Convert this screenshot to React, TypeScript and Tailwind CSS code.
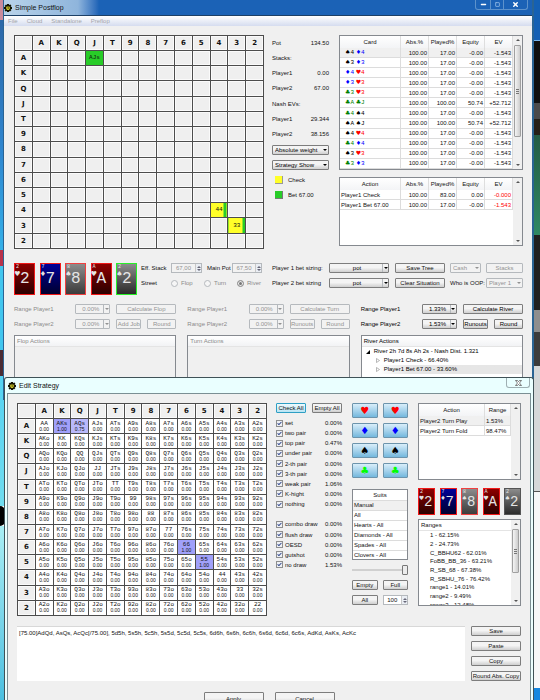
import type { ReactNode } from 'react';
import clsx from 'clsx';
import { Check, Minus, Square, X } from 'lucide-react';

const RANKS = ['A', 'K', 'Q', 'J', 'T', '9', '8', '7', '6', '5', '4', '3', '2'];

const MONO = '[font-family:"Liberation_Mono",monospace]';
const SYMBOL = '[font-family:"DejaVu_Sans",sans-serif]';

const SUITS: Record<string, { glyph: string; small: string; big: string; name: string }> = {
  h: { glyph: '♥', small: 'text-[#ff0000]', big: 'text-[#ff0000]', name: 'Hearts' },
  d: { glyph: '♦', small: 'text-[#0000ff]', big: 'text-[#0000ff]', name: 'Diamonds' },
  s: { glyph: '♠', small: 'text-black', big: 'text-black', name: 'Spades' },
  c: { glyph: '♣', small: 'text-[#008000]', big: 'text-[#00ff00]', name: 'Clubs' },
};

const COMBOS = [
  ['4s', '4d'],
  ['3s', '3d'],
  ['4d', '4h'],
  ['3d', '3h'],
  ['3c', '3h'],
  ['Ac', 'Jc', '100.00', '50.74', '+52.712'],
  ['4c', '4s'],
  ['As', 'Js', '100.00', '50.74', '+52.712'],
  ['4s', '4h'],
  ['4c', '4d'],
  ['3s', '3h'],
  ['3c', '3d'],
];

const CARDS = [
  { rank: '2', suit: 'h', face: 'from-[#8e0000] to-[#2c0000]', edge: 'border-[#f01818]' },
  { rank: '7', suit: 'd', face: 'from-[#00009a] to-[#000030]', edge: 'border-[#f01818]' },
  { rank: '8', suit: 's', face: 'from-[#8c8c8c] to-[#3c3c3c]', edge: 'border-[#f04040]' },
  { rank: 'A', suit: 'h', face: 'from-[#8e0000] to-[#2c0000]', edge: 'border-[#f01818]' },
  { rank: '2', suit: 's', face: 'from-[#8c8c8c] to-[#2c2c2c]', edge: 'border-[#28f028]' },
];

const WEIGHTS: Record<string, { value: string; color: string }> = {
  AKs: { value: '1.00', color: 'bg-[#a0a0fa]' },
  AQs: { value: '0.75', color: 'bg-[#b9b9fb]' },
  '66': { value: '1.00', color: 'bg-[#a0a0fa]' },
  '55': { value: '1.00', color: 'bg-[#a0a0fa]' },
};

const MADE_HANDS = [
  ['set', '0.00%'],
  ['two pair', '0.00%'],
  ['top pair', '0.47%'],
  ['under pair', '0.00%'],
  ['2-th pair', '0.00%'],
  ['3-th pair', '0.00%'],
  ['weak pair', '1.06%'],
  ['K-hight', '0.00%'],
  ['nothing', '0.00%'],
];

const DRAWS = [
  ['combo draw', '0.00%'],
  ['flush draw', '0.00%'],
  ['OESD', '0.00%'],
  ['gutshot', '0.00%'],
  ['no draw', '1.53%'],
];

const RANGES = [
  '1 - 62.15%',
  '2 - 24.73%',
  'C_BBHU62 - 62.01%',
  'FoBB_BB_36 - 63.21%',
  'R_SB_68 - 67.38%',
  'R_SBHU_76 - 76.42%',
  'range1 - 14.01%',
  'range2 - 9.49%',
  'range3 - 12.48%',
];

const handName = (row: number, col: number) => {
  if (row === col) return RANKS[row] + RANKS[row];
  return row < col ? `${RANKS[row]}${RANKS[col]}s` : `${RANKS[col]}${RANKS[row]}o`;
};

const Btn = ({ children, className, disabled, active }: {
  children: ReactNode;
  className?: string;
  disabled?: boolean;
  active?: boolean;
}) => (
  <button
    type="button"
    disabled={disabled}
    className={clsx(
      'flex h-[10px] items-center justify-center whitespace-nowrap rounded-[1px] border leading-none',
      disabled && 'border-[#b5b9bd] bg-[#f2f2f2] text-[#929292]',
      active && 'border-[#2e9fc4] bg-linear-to-b from-[#eefafe] to-[#b9e4f3]',
      !disabled && !active && 'border-[#7d7d7d] bg-linear-to-b from-[#f4f4f4] from-45% to-[#cfcfcf]',
      className,
    )}
  >
    {children}
  </button>
);

const Arrow = ({ up, className }: { up?: boolean; className?: string }) => (
  <svg viewBox="0 0 4 2" className={clsx('h-[2px] w-[4px] fill-current', className)}>
    <path d={up ? 'M0 2 2 0 4 2z' : 'M0 0h4L2 2z'} />
  </svg>
);

const Combo = ({ value, label, className, disabled, split, center }: {
  value: string;
  label: string;
  className?: string;
  disabled?: boolean;
  split?: boolean;
  center?: boolean;
}) => (
  <div className={clsx('relative h-[10px]', disabled ? 'text-[#929292]' : 'text-black', className)}>
    <select
      aria-label={label}
      disabled={disabled}
      className={clsx(
        'block h-full w-full appearance-none rounded-[1px] border pl-[2px] leading-[8px]',
        disabled ? 'border-[#b5b9bd] bg-[#f2f2f2]' : 'border-[#7d7d7d] bg-linear-to-b from-[#f4f4f4] from-45% to-[#cfcfcf]',
        center && 'pr-[6px] [text-align-last:center]',
      )}
    >
      <option>{value}</option>
    </select>
    <span
      className={clsx(
        'pointer-events-none absolute inset-y-[1px] right-[1px] flex w-[6px] items-center justify-center',
        split && 'border-l border-[#b5b9bd]',
      )}
    >
      <Arrow />
    </span>
  </div>
);

const Spin = ({ value, label, className, disabled }: {
  value: string;
  label: string;
  className?: string;
  disabled?: boolean;
}) => (
  <div
    className={clsx(
      'flex h-[10px] border border-[#b5b9bd]',
      disabled ? 'bg-[#f2f2f2] text-[#929292]' : 'bg-white',
      className,
    )}
  >
    <input aria-label={label} defaultValue={value} disabled={disabled} className="w-0 flex-1 text-center leading-none" />
    <span className="flex w-[6px] flex-col items-center justify-center gap-px border-l border-[#c8c8c8] bg-[#eaeef4] text-[#667]">
      <Arrow up />
      <Arrow />
    </span>
  </div>
);

const Scroll = ({ thumb, tall }: { thumb?: boolean; tall?: string }) => (
  <div className="flex w-[9px] shrink-0 flex-col items-center bg-[#f0f0f0] py-[3px] text-[#555]">
    <Arrow up />
    <div
      className={clsx(
        'mt-[4px] flex w-[7px] flex-col items-center justify-center gap-px rounded-[1px]',
        thumb && 'border border-[#a0a0a0] bg-linear-to-r from-[#f5f5f5] to-[#cdcdcd]',
        tall,
      )}
    >
      {thumb && [0, 1, 2].map((i) => <i key={i} className="h-px w-[3px] bg-[#777]" />)}
    </div>
    <Arrow className="mt-auto" />
  </div>
);

const AppIcon = () => (
  <svg viewBox="0 0 16 16" className="size-[8px]">
    <path d="M6 0h4v2l3-1 2 3-2 2h3v4h-3l2 2-3 3-2-1v2H6v-2l-3 1-2-3 2-2H0V6h3L1 4l3-3 2 1z" fill="#141400" />
    <path d="M5 5h6l1 3-2 4H6L4 8z" fill="#c9c32a" />
    <path d="M7 7h3v2H7z" fill="#3a3800" />
  </svg>
);

const RankHead = ({ children }: { children?: ReactNode }) => (
  <th
    className={clsx(
      'border border-[#4c4c4c] bg-[#efefef] p-0 text-center text-[7px] font-bold leading-[8px] shadow-[inset_0_0_0_1px_#fafafa]',
      SYMBOL,
    )}
  >
    {children}
  </th>
);

const HandMatrix = ({ className, renderCell }: {
  className?: string;
  renderCell: (hand: string) => ReactNode;
}) => (
  <table className={clsx('table-fixed border-collapse', className)}>
    <thead>
      <tr className="h-[15px]">
        <RankHead />
        {RANKS.map((rank) => <RankHead key={rank}>{rank}</RankHead>)}
      </tr>
    </thead>
    <tbody>
      {RANKS.map((rank, row) => (
        <tr key={rank} className="h-[15px]">
          <RankHead>{rank}</RankHead>
          {RANKS.map((_, col) => renderCell(handName(row, col)))}
        </tr>
      ))}
    </tbody>
  </table>
);

const BOARD_COLORS: Record<string, string> = {
  AJs: 'bg-[#28cc28]',
  '44': 'bg-linear-to-r from-[#ffff28] from-82% to-[#28cc28] to-82%',
  '33': 'bg-linear-to-r from-[#ffff28] from-82% to-[#28cc28] to-82%',
};

const boardCell = (hand: string) => (
  <td
    key={hand}
    className={clsx(
      'border border-[#4c4c4c] p-0 text-center text-[6px] leading-[8px]',
      MONO,
      BOARD_COLORS[hand] ?? 'bg-[#efefef] shadow-[inset_0_0_0_1px_#fafafa]',
    )}
  >
    {BOARD_COLORS[hand] && hand}
  </td>
);

const rangeCell = (hand: string) => (
  <td
    key={hand}
    className={clsx(
      'border border-[#4c4c4c] p-0 text-center text-[6px] leading-[6px]',
      MONO,
      WEIGHTS[hand]?.color ?? 'bg-white',
    )}
  >
    {hand}
    <span className='block [font-family:"Liberation_Sans",sans-serif] text-[5px] leading-[5px]'>
      {WEIGHTS[hand]?.value ?? '0.00'}
    </span>
  </td>
);

const Cards = ({ small }: { small?: boolean }) => (
  <div className={clsx('flex justify-between', !small && 'w-[123px]')}>
    {CARDS.map((card, i) => (
      <div
        key={i}
        className={clsx(
          'flex border bg-linear-to-b text-[#e4e4e4]',
          MONO,
          card.face,
          small && i === 4 ? 'border-[#555]' : card.edge,
          small ? 'h-[27px] w-[17px]' : 'h-[32px] w-[21px]',
        )}
      >
        <span className="flex w-[5px] shrink-0 flex-col items-center text-[5px] leading-[6px]">
          <span>{card.rank}</span>
          <span className={clsx(SYMBOL, small ? 'text-[6px]' : 'text-[7px] leading-[9px]')}>
            {SUITS[card.suit].glyph}
          </span>
        </span>
        <span className={clsx('self-center', small ? 'text-[14px]' : 'text-[16px]')}>{card.rank}</span>
      </div>
    ))}
  </div>
);

const SmallCard = ({ card }: { card: string }) => (
  <span className={clsx(MONO, SUITS[card[1]].small)}>
    <span className={SYMBOL}>{SUITS[card[1]].glyph}</span>
    {card[0]}
  </span>
);

const StatsHead = ({ first }: { first: string }) => (
  <thead>
    <tr className="h-[12px] bg-linear-to-b from-white to-[#f3f4f6]">
      {[first, 'Abs.%', 'Played%', 'Equity', 'EV'].map((name, i) => (
        <th key={name} className={clsx('border-r border-[#dedede] p-0 font-normal', i > 0 && 'w-[28px]')}>
          {name}
        </th>
      ))}
    </tr>
  </thead>
);

const STAT = 'border-r border-b border-[#dcdcdc] p-0 pr-[1px] text-right';

const CardTable = () => (
  <div className="flex h-[135px] border border-[#85898f] bg-white">
    <table className="h-full flex-1 table-fixed border-separate border-spacing-0">
      <StatsHead first="Card" />
      <tbody>
        {COMBOS.map(([a, b, played = '17.00', equity = '-0.00', ev = '-1.543'], i) => (
          <tr key={a + b} className={i === 0 ? 'bg-[#f0f0f0]' : ''}>
            <td className="border-r border-b border-[#dcdcdc] p-0 pl-[5px] leading-[8px]">
              <SmallCard card={a} /> <SmallCard card={b} />
            </td>
            <td className={STAT}>100.00</td>
            <td className={STAT}>{played}</td>
            <td className={STAT}>{equity}</td>
            <td className={STAT}>{ev}</td>
          </tr>
        ))}
      </tbody>
    </table>
    <Scroll thumb tall="h-[92px]" />
  </div>
);

const ActionTable = () => (
  <div className="flex h-[69px] items-stretch border border-[#85898f] bg-white">
    <div className="flex-1">
      <table className="w-full table-fixed border-separate border-spacing-0">
        <StatsHead first="Action" />
        <tbody>
          {[
            ['Player1 Check', '100.00', '83.00', '0.00', '-0.000'],
            ['Player1 Bet 67.00', '100.00', '17.00', '-0.00', '-1.543'],
          ].map((row) => (
            <tr key={row[0]} className="h-[10px]">
              {row.map((value, i) => (
                <td
                  key={i}
                  className={clsx(
                    i === 0 ? 'border-r border-b border-[#dcdcdc] p-0 pl-[1px]' : STAT,
                    i === 4 && 'text-[#ff0000]',
                  )}
                >
                  {value}
                </td>
              ))}
            </tr>
          ))}
        </tbody>
      </table>
    </div>
    <Scroll />
  </div>
);

const Info = ({ label, value }: { label: string; value?: string }) => (
  <div className="flex items-center justify-between">
    <span>{label}</span>
    <span>{value}</span>
  </div>
);

const InfoColumn = () => (
  <div className="grid h-[168px] w-[57px] grid-rows-11 items-center">
    <Info label="Pot" value="134.50" />
    <Info label="Stacks:" />
    <Info label="Player1" value="0.00" />
    <Info label="Player2" value="67.00" />
    <Info label="Nash EVs:" />
    <Info label="Player1" value="29.344" />
    <Info label="Player2" value="38.156" />
    <Combo label="Weight mode" value="Absolute weight" />
    <Combo label="Strategy mode" value="Strategy Show" />
    <div className="flex items-center gap-[5px] pl-[3px]">
      <i className="size-[8px] border-r border-b border-[#999] bg-[#ffff28]" />
      Check
    </div>
    <div className="flex items-center gap-[5px] pl-[3px]">
      <i className="size-[8px] border-r border-b border-[#777] bg-[#28cc28]" />
      Bet 67.00
    </div>
  </div>
);

const Settings = () => (
  <div className="mt-[14px] flex">
    <div className="flex w-[258px] gap-[4px]">
      <Cards />
      <div className="flex flex-col gap-[5px]">
        <div className="flex items-center">
          <span className="w-[30px]">Eff. Stack</span>
          <Spin label="Eff. Stack" value="67,00" disabled className="w-[31px]" />
          <span className="ml-[5px] w-[25px] whitespace-nowrap">Main Pot</span>
          <Spin label="Main Pot" value="67,50" disabled className="w-[30px]" />
        </div>
        <div className="flex h-[10px] items-center">
          <span className="w-[30px]">Street</span>
          {['Flop', 'Turn', 'River'].map((street) => (
            <label key={street} className="flex w-[33px] items-center gap-[3px] text-[#8a8a8a]">
              <input
                type="radio"
                name="street"
                disabled
                defaultChecked={street === 'River'}
                className="size-[7px] appearance-none rounded-full border border-[#b5b9bd] bg-[#f6f6f6] checked:border-[#999] checked:bg-[#777] checked:shadow-[inset_0_0_0_1px_#eee]"
              />
              {street}
            </label>
          ))}
        </div>
      </div>
    </div>
    <div className="flex flex-1 flex-col gap-[5px]">
      <div className="flex items-center">
        <span className="w-[57px]">Player 1 bet sizing:</span>
        <Combo label="Player 1 bet sizing" value="pot" split center className="w-[60px]" />
        <Btn className="ml-[6px] w-[50px]">Save Tree</Btn>
        <Combo label="Game type" value="Cash" disabled className="ml-[5px] w-[31px]" />
        <Btn disabled className="ml-[5px] flex-1">Stacks</Btn>
      </div>
      <div className="flex items-center">
        <span className="w-[57px]">Player 2 bet sizing</span>
        <Combo label="Player 2 bet sizing" value="pot" split center className="w-[60px]" />
        <Btn className="ml-[6px] w-[50px]">Clear Situation</Btn>
        <span className="ml-[5px] w-[36px] whitespace-nowrap">Who is OOP:</span>
        <Combo label="Who is OOP" value="Player 1" disabled className="flex-1" />
      </div>
    </div>
  </div>
);

const StreetPanel = ({ street, first, values, enabled, children }: {
  street: string;
  first: string;
  values: string[];
  enabled?: boolean;
  children?: ReactNode;
}) => (
  <div className={clsx('flex flex-col', enabled ? 'text-black' : 'text-[#8a8a8a]')}>
    <div className="flex items-center">
      <span className="flex-1">Range Player1</span>
      <Combo label={`${street} range player 1`} value={values[0]} disabled={!enabled} split center className="w-[35px]" />
      <Btn disabled={!enabled} className="ml-[6px] w-[60px]">Calculate {street}</Btn>
    </div>
    <div className="mt-[5px] flex items-center">
      <span className="flex-1">Range Player2</span>
      <Combo label={`${street} range player 2`} value={values[1]} disabled={!enabled} split center className="w-[35px]" />
      <Btn disabled={!enabled} className="ml-[6px] w-[25px]">{first}</Btn>
      <Btn disabled={!enabled} className="ml-[6px] w-[29px]">Round</Btn>
    </div>
    <div className={clsx('mt-[6px] h-[64px] border border-[#85898f]', enabled ? 'bg-white' : 'bg-[#f0f0f0]')}>
      <div className="h-[11px] border-b border-[#e4e4e4] bg-linear-to-b from-white to-[#f2f3f5] pl-[2px] leading-[11px]">
        {street} Actions
      </div>
      {children}
    </div>
  </div>
);

const MainWindow = () => (
  <main className="ml-[3px] mr-[6px] h-[400px] border-r-[2px] border-l border-[#2a6494] bg-[#f0f0f0]">
    <header className="flex h-[15px] items-center gap-[3px] bg-linear-to-r from-[#b9d3ea] from-0% via-[#8fb5dc] via-14% to-[#1b62b6] to-18% text-[7px]">
      <AppIcon />
      <h1>Simple Postflop</h1>
      <div className="mr-[4px] ml-auto flex self-start rounded-b-[3px] border border-t-0 border-[#5d92cb] text-white">
        <button type="button" aria-label="Minimize" className="flex h-[9px] w-[14px] items-center justify-center">
          <Minus size={7} strokeWidth={5} />
        </button>
        <button type="button" aria-label="Maximize" className="flex h-[9px] w-[14px] items-center justify-center border-x border-[#5d92cb] text-[#8fb8e4]">
          <Square size={5} strokeWidth={4} />
        </button>
        <button type="button" aria-label="Close" className="flex h-[9px] w-[23px] items-center justify-center">
          <X size={7} strokeWidth={5} />
        </button>
      </div>
    </header>
    <nav className="flex h-[11px] items-center gap-[13px] border-t border-[#1c3f66] bg-linear-to-b from-white to-[#d5dcef] pl-[4px] text-[#a3a5aa]">
      <a href="#file">File</a>
      <a href="#cloud" className="-ml-[4px]">Cloud</a>
      <a href="#standalone" className="-ml-[4px]">Standalone</a>
      <a href="#preflop" className="-ml-[4px]">Preflop</a>
    </nav>
    <div className="pt-[9px] pr-[9px] pl-[10px]">
      <div className="flex">
        <HandMatrix className="h-[214px] w-[250px]" renderCell={boardCell} />
        <div className="ml-[8px]">
          <InfoColumn />
        </div>
        <div className="ml-[10px] flex flex-1 flex-col gap-[7px]">
          <CardTable />
          <ActionTable />
        </div>
      </div>
      <Settings />
      <div className="mt-[9px] grid grid-cols-3 gap-[11px]">
        <StreetPanel street="Flop" first="Add Job" values={['0.00%', '0.00%']} />
        <StreetPanel street="Turn" first="Runouts" values={['0.00%', '0.00%']} />
        <StreetPanel street="River" first="Runouts" values={['1.33%', '1.53%']} enabled>
          <ul className="leading-[9px]">
            <li className="flex items-center gap-[4px] pl-[4px]">
              <svg viewBox="0 0 4 4" className="size-[4px]"><path d="M4 0v4H0z" /></svg>
              River 2h 7d 8s Ah 2s - Nash Dist. 1.321
            </li>
            {['Player1 Check - 66.40%', 'Player1 Bet 67.00 - 33.60%'].map((line, i) => (
              <li key={line} className={clsx('flex items-center gap-[4px] pl-[14px]', i === 1 && 'bg-linear-to-r from-white from-10% to-[#e6e6e6] to-30%')}>
                <svg viewBox="0 0 4 5" className="h-[5px] w-[4px] fill-none stroke-[#999]" strokeWidth="0.7"><path d="M.5.5 3.5 2.5.5 4.5z" /></svg>
                {line}
              </li>
            ))}
          </ul>
        </StreetPanel>
      </div>
    </div>
  </main>
);

const HandFilter = ({ label, value }: { label: string; value: string }) => (
  <label className="flex items-center">
    <span className="relative mr-[2px] flex size-[7px]">
      <input type="checkbox" defaultChecked className="size-[7px] appearance-none border border-[#8e8f8f] bg-[#eef0f4]" />
      <Check size={5} strokeWidth={5} className="pointer-events-none absolute top-[1px] left-[1px] text-[#31478c]" />
    </span>
    {label}
    <span className="ml-auto">{value}</span>
  </label>
);

const SuitColumn = () => (
  <div className="ml-[10px] flex w-[56px] flex-col">
    <div className="grid grid-cols-2 gap-[5px]">
      {['h', 'd', 's', 'c'].flatMap((suit) =>
        [1, 2].map((n) => (
          <button
            key={suit + n}
            type="button"
            aria-label={`${SUITS[suit].name} ${n}`}
            className={clsx(
              'flex h-[15px] items-center justify-center rounded-[1px] border border-[#6d94ac] bg-linear-to-b from-[#d9eefa] to-[#74b8dd] text-[10px] leading-none',
              SYMBOL,
              SUITS[suit].big,
            )}
          >
            {SUITS[suit].glyph}
          </button>
        )),
      )}
    </div>
    <div className="mt-[11px] h-[71px] border border-[#85898f] bg-white">
      <div className="h-[11px] border-b border-[#dcdcdc] text-center leading-[11px]">Suits</div>
      <ul>
        {['Manual', 'All', 'Hearts - All', 'Diamonds - All', 'Spades - All', 'Clovers - All'].map((name, i) => (
          <li key={name} className={clsx('box-content h-[9px] border-b border-[#dcdcdc] pl-[1px] leading-[9px] last:h-[8px] last:border-0', i === 0 && 'bg-[#f0f0f0]')}>
            {name}
          </li>
        ))}
      </ul>
    </div>
    <input
      type="range"
      aria-label="Weight"
      defaultValue={100}
      className="mt-[5px] h-[10px] w-full appearance-none bg-linear-to-b from-transparent from-40% via-[#b0b0b0] via-50% to-transparent to-60% [&::-webkit-slider-thumb]:h-[10px] [&::-webkit-slider-thumb]:w-[6px] [&::-webkit-slider-thumb]:appearance-none [&::-webkit-slider-thumb]:rounded-[1px] [&::-webkit-slider-thumb]:border [&::-webkit-slider-thumb]:border-[#777] [&::-webkit-slider-thumb]:bg-[#ececec]"
    />
    <div className="mt-[5px] grid grid-cols-2 gap-[5px]">
      <Btn>Empty</Btn>
      <Btn>Full</Btn>
      <Btn>All</Btn>
      <Spin label="Weight percent" value="100" />
    </div>
  </div>
);

const RangeColumn = () => (
  <div className="ml-[10px] flex flex-1 flex-col">
    <div className="flex h-[77px] border border-[#85898f] bg-white">
      <div className="flex-1">
        <table className="w-full table-fixed border-separate border-spacing-0">
          <thead>
            <tr className="h-[12px] bg-linear-to-b from-white to-[#f3f4f6]">
              <th className="border-r border-[#dedede] p-0 font-normal">Action</th>
              <th className="w-[26px] border-r border-[#dedede] p-0 font-normal">Range</th>
            </tr>
          </thead>
          <tbody>
            {[['Player2 Turn Play', '1.53%'], ['Player2 Turn Fold', '98.47%']].map(([action, value], i) => (
              <tr key={action} className={clsx('h-[10px]', i === 0 && 'bg-[#f0f0f0]')}>
                <td className="border-r border-b border-[#dcdcdc] p-0 pl-[1px]">{action}</td>
                <td className="border-r border-b border-[#dcdcdc] p-0 pl-[1px]">{value}</td>
              </tr>
            ))}
          </tbody>
        </table>
      </div>
      <Scroll />
    </div>
    <div className="mt-[8px]">
      <Cards small />
    </div>
    <div className="mt-[4px] flex h-[87px] border border-[#85898f] bg-white">
      <div className="flex-1 overflow-hidden">
        <div className="h-[11px] border-b border-[#e4e4e4] pl-[2px] leading-[11px]">Ranges</div>
        <ul className="grid h-[78px] auto-rows-fr items-center pl-[11px]">
          {RANGES.map((range) => <li key={range}>{range}</li>)}
        </ul>
      </div>
      <Scroll thumb tall="h-[44px]" />
    </div>
  </div>
);

const EditStrategy = () => (
  <section
    role="dialog"
    aria-label="Edit Strategy"
    className="absolute top-[377px] right-[6px] bottom-0 left-[4px] overflow-hidden rounded-t-[3px] border-x border-t border-[#3f5257] bg-[#eaffff] px-[2px]"
  >
    <header className="flex h-[15px] items-center gap-[3px] pl-[1px] text-[7px]">
      <AppIcon />
      <h2>Edit Strategy</h2>
      <button
        type="button"
        aria-label="Close"
        className="mr-[1px] ml-auto flex h-[10px] w-[24px] items-center justify-center self-start rounded-b-[3px] border border-t-0 border-[#9fb0b3] text-[#555]"
      >
        <svg viewBox="0 0 14 12" className="h-[6px] w-[7px] fill-white stroke-[#555]" strokeWidth="1.5">
          <path d="M1 1h4l2 2.500 2-2.500h4l-4 5 4 5H9L7 8.500 5 11H1l4-5z" />
        </svg>
      </button>
    </header>
    <div className="h-full border border-[#7b8f94] bg-[#f0f0f0] pt-[9px] pr-[9px] pl-[9px]">
      <div className="flex h-[213px]">
        <HandMatrix className="h-[213px] w-[250px]" renderCell={rangeCell} />
        <div className="ml-[9px] w-[66px]">
          <div className="flex gap-[6px]">
            <Btn active className="flex-1">Check All</Btn>
            <Btn className="flex-1">Empty All</Btn>
          </div>
          <div className="mt-[5px] grid h-[152px] grid-rows-15">
            {MADE_HANDS.map(([label, value]) => <HandFilter key={label} label={label} value={value} />)}
            <div />
            {DRAWS.map(([label, value]) => <HandFilter key={label} label={label} value={value} />)}
          </div>
        </div>
        <SuitColumn />
        <RangeColumn />
      </div>
      <div className="mt-[10px] flex gap-[6px]">
        <textarea
          aria-label="Range text"
          className="h-[55px] flex-1 resize-none border-t border-[#d8d8d8] bg-white px-[2px] pt-[2px] leading-[8px]"
          defaultValue="[75.00]AdQd, AsQs, AcQc[/75.00], 5d5h, 5s5h, 5c5h, 5s5d, 5c5d, 5c5s, 6d6h, 6s6h, 6c6h, 6s6d, 6c6d, 6c6s, AdKd, AsKs, AcKc"
        />
        <div className="flex w-[50px] flex-col gap-[5px]">
          <Btn>Save</Btn>
          <Btn>Paste</Btn>
          <Btn>Copy</Btn>
          <Btn>Round Abs. Copy</Btn>
        </div>
      </div>
      <div className="mt-[11px] flex justify-center gap-[11px]">
        <Btn className="h-[13px] w-[60px]">Apply</Btn>
        <Btn className="h-[13px] w-[60px]">Cancel</Btn>
      </div>
    </div>
  </section>
);

// Slices of the windows and wallpaper showing on both sides of the app
const Desktop = () => (
  <div className="absolute inset-0 -z-10 flex justify-between overflow-hidden">
    <div className="flex w-[5px] flex-col">
      <div className="h-[20px] bg-[#c98a9c]" />
      <div className="h-[130px] bg-linear-to-b from-[#2c68a8] to-[#2f86cf]" />
      <div className="h-[100px] bg-linear-to-b from-[#2f86cf] to-[#35b0e8]" />
      <div className="h-[16px] bg-[#b8324a]" />
      <div className="h-[84px] bg-[#41c5ee]" />
      <div className="h-[26px] bg-[#4b2b33]" />
      <div className="h-[130px] bg-linear-to-b from-[#54d2f2] to-[#6fdcef]" />
      <div className="h-[20px] rounded-r-full bg-black" />
      <div className="flex-1 bg-linear-to-b from-[#a8eef4] to-[#48bfe0]" />
    </div>
    <div className="flex w-[7px] flex-col">
      <div className="h-[41px] border-b border-[#78b6ee] bg-[#1460b4]" />
      <div className="h-[62px] bg-[#101010]" />
      <div className="h-[16px] bg-[#4a4a4a]" />
      <div className="h-[16px] bg-[#252018]" />
      <div className="h-[100px] bg-linear-to-b from-[#235c45] to-[#2f8863]" />
      <div className="h-[75px] bg-[#202020]" />
      <div className="h-[22px] bg-[#8e8e8e]" />
      <div className="h-[34px] bg-[#3c3c3c]" />
      <div className="h-[126px] border-b border-[#555] bg-[#d5d8d9]" />
      <div className="flex-1 bg-[#f6f8f9]" />
      <div className="h-[12px] bg-[#1588e0]" />
    </div>
  </div>
);

const App = () => (
  <div className='relative isolate h-screen min-w-[540px] overflow-hidden [font-family:"Liberation_Sans",Arial,sans-serif] text-[6px] leading-[8px] text-[#111]'>
    <Desktop />
    <MainWindow />
    <EditStrategy />
  </div>
);

export default App;
